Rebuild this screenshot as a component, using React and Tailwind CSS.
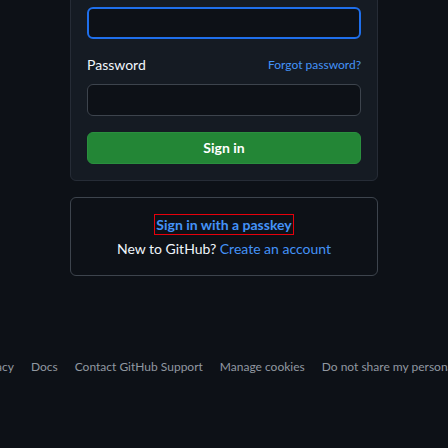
import React from 'react';

function FooterLink({ children }) {
    return <li className="shrink-0 whitespace-nowrap">{children}</li>;
}

export default function App() {
    return (
        <div
            className="min-h-[448px] w-full overflow-hidden bg-[#0d1117] text-[#f0f6fc]"
            style={{ fontFamily: 'Lato, "Noto Sans", sans-serif' }}
        >
            <div className="mx-auto w-[308px]">
                {/* Login card */}
                <div className="-mt-[10px] rounded-md border border-[#262c36] bg-[#151b23] px-4 pt-4 pb-4">
                    <input
                        type="text"
                        className="block h-8 w-full rounded-md border-2 border-[#1f6feb] bg-[#0d1117] px-2 text-sm outline-none"
                    />

                    <div className="mt-4 mb-[9px] flex h-5 items-center justify-between">
                        <label className="text-sm">Password</label>
                        <a className="text-xs text-[#4493f8]">Forgot password?</a>
                    </div>
                    <input
                        type="password"
                        className="block h-8 w-full rounded-md border border-[#3d444d] bg-[#0d1117] px-2 text-sm outline-none"
                    />

                    <button className="mt-4 flex h-8 w-full items-center justify-center rounded-md border border-[#2a8f3e] bg-[#238636] text-sm font-bold text-white">
                        Sign in
                    </button>
                </div>

                {/* Passkey / sign up box */}
                <div className="mt-4 rounded-md border border-[#3d444d] p-4 text-center text-sm">
                    <div className="flex justify-center">
                        <span className="inline-block h-[21px] border border-red-600 px-px font-bold leading-[19px] text-[#4493f8]">
                            Sign in with a passkey
                        </span>
                    </div>
                    <p className="mt-1 leading-5">
                        New to GitHub? <a className="text-[#4493f8]">Create an account</a>
                    </p>
                </div>
            </div>

            {/* Footer */}
            <ul className="mt-[83px] flex justify-center gap-[17px] text-xs leading-4 text-[#9198a1]">
                <FooterLink>Terms</FooterLink>
                <FooterLink>Privacy</FooterLink>
                <FooterLink>Docs</FooterLink>
                <FooterLink>Contact GitHub Support</FooterLink>
                <FooterLink>Manage cookies</FooterLink>
                <FooterLink>Do not share my personal information</FooterLink>
            </ul>
        </div>
    );
}
